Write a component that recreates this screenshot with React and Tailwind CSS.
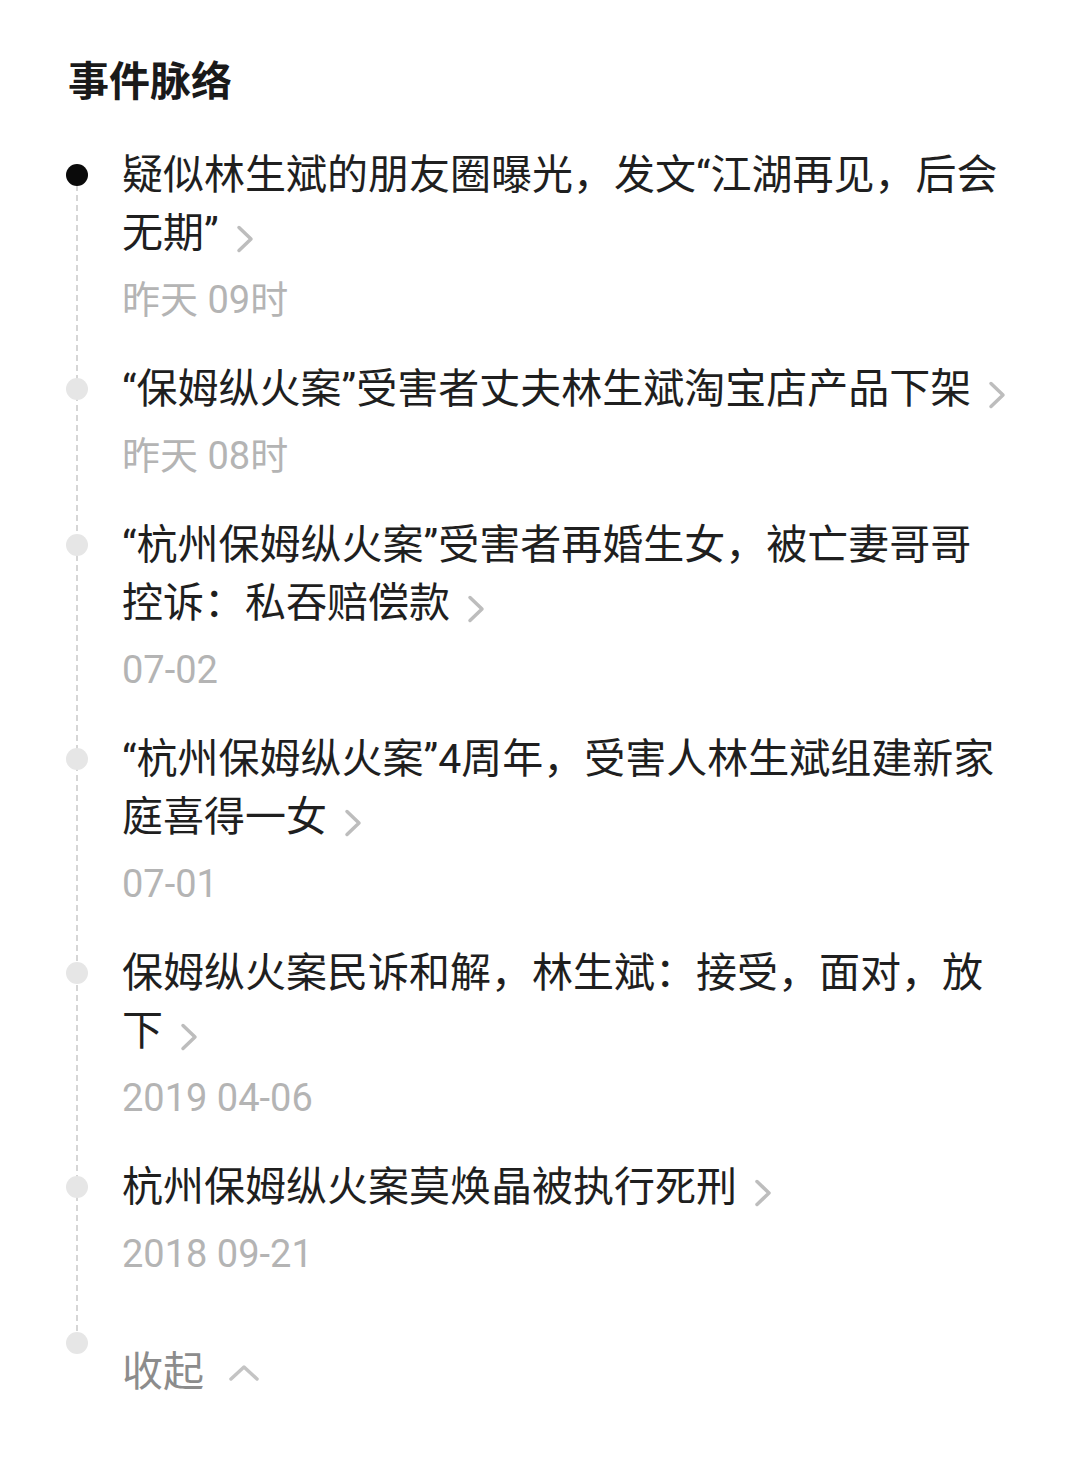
import React from "react";

const events = [
  { title: "疑似林生斌的朋友圈曝光，发文“江湖再见，后会无期”", time: "昨天 09时", active: true },
  { title: "“保姆纵火案”受害者丈夫林生斌淘宝店产品下架", time: "昨天 08时" },
  { title: "“杭州保姆纵火案”受害者再婚生女，被亡妻哥哥控诉：私吞赔偿款", time: "07-02" },
  { title: "“杭州保姆纵火案”4周年，受害人林生斌组建新家庭喜得一女", time: "07-01" },
  { title: "保姆纵火案民诉和解，林生斌：接受，面对，放下", time: "2019 04-06" },
  { title: "杭州保姆纵火案莫焕晶被执行死刑", time: "2018 09-21" },
];

const Chevron = () => (
  <svg
    width="18"
    height="28"
    viewBox="0 0 18 28"
    className="inline-block ml-[17px] align-[-6px]"
    fill="none"
    stroke="#bdbdbd"
    strokeWidth="3.5"
    strokeLinecap="round"
    strokeLinejoin="round"
  >
    <path d="M3 2.5 L15 14 L3 25.5" />
  </svg>
);

const Dot = ({ active }) => (
  <div className="w-[56px] shrink-0">
    <div
      className={
        "relative z-10 mt-[18px] h-[22px] w-[22px] rounded-full " +
        (active ? "bg-[#0a0a0a]" : "bg-[#e6e6e6]")
      }
    />
  </div>
);

export default function App() {
  return (
    <div className="min-h-screen bg-white pl-[66px] pt-[53px] font-['Roboto','Noto_Sans_CJK_SC',sans-serif]">
      <h2 className="ml-[2px] text-[41px] font-bold leading-[58px] text-[#1a1a1a]">事件脉络</h2>

      <div className="relative mt-[35px]">
        {/* dashed timeline rail */}
        <div className="absolute left-[10px] top-[29px] bottom-[58px] w-[2px] bg-[repeating-linear-gradient(to_bottom,#d6d6d6_0_6px,transparent_6px_10px)]" />

        {events.map((ev, i) => (
          <div key={i} className="flex pb-[36px]">
            <Dot active={ev.active} />
            <div className="w-[890px]">
              <p className="text-[41px] leading-[58px] text-[#1f1f1f]">
                {ev.title}
                <Chevron />
              </p>
              <p className="mt-[14px] text-[38px] leading-[48px] text-[#b4b4b4]">{ev.time}</p>
            </div>
          </div>
        ))}

        <div className="flex">
          <Dot />
          <div className="flex items-center pt-[29px] h-[87px]">
            <span className="text-[41px] leading-[58px] text-[#8c8c8c]">收起</span>
            <svg
              width="30"
              height="17"
              viewBox="0 0 30 17"
              className="ml-[25px]"
              fill="none"
              stroke="#c4c4c4"
              strokeWidth="3.5"
              strokeLinecap="round"
              strokeLinejoin="round"
            >
              <path d="M2 15 L15 3 L28 15" />
            </svg>
          </div>
        </div>
      </div>
    </div>
  );
}
